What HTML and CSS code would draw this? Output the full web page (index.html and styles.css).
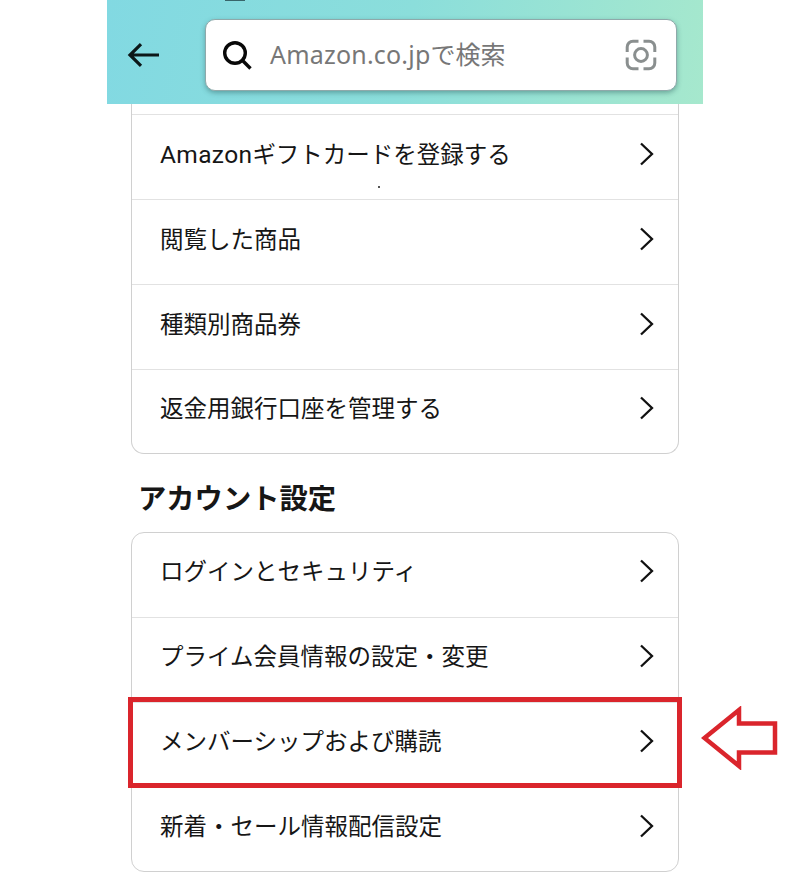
FILE: index.html
```html
<!DOCTYPE html>
<html lang="ja">
<head>
    <meta charset="UTF-8">
    <meta name="viewport" content="width=device-width, initial-scale=1.0">
    <title>アカウントサービス</title>
    <link rel="stylesheet" href="styles.css">
</head>
<body>
    <div class="phone">
        <header class="header">
            <span class="status-mark"></span>
            <svg class="back" width="34" height="28" viewBox="0 0 34 28">
                <path d="M32 14H3M14 3.2L3 14l11 10.8"/>
            </svg>
            <div class="search">
                <svg class="search-icon" width="32" height="32" viewBox="0 0 32 32">
                    <circle cx="13" cy="13" r="10.3"/>
                    <path d="M20.3 20.3L28.5 28.5"/>
                </svg>
                <span class="search-text"><span class="search-latin">Amazon.co.jp</span>で検索</span>
                <svg class="camera" width="32" height="32" viewBox="0 0 32 32">
                    <path d="M2.2 13V8a5.8 5.8 0 0 1 5.8-5.8h5.5M18.5 2.2H24A5.8 5.8 0 0 1 29.8 8v5M29.8 18.5V24a5.8 5.8 0 0 1-5.8 5.8h-5.5M13.5 29.8H8A5.8 5.8 0 0 1 2.2 24v-5.5"/>
                    <circle cx="16" cy="16" r="6.4"/>
                </svg>
            </div>
        </header>

        <ul class="card card-cut">
            <li class="row"><span><span class="latin">Amazon</span>ギフトカードを登録する</span><svg class="chevron" width="16" height="24" viewBox="0 0 16 24"><path d="M2 1.5L13 12 2 22.5"/></svg><i class="dot"></i></li>
            <li class="row"><span>閲覧した商品</span><svg class="chevron" width="16" height="24" viewBox="0 0 16 24"><path d="M2 1.5L13 12 2 22.5"/></svg></li>
            <li class="row"><span>種類別商品券</span><svg class="chevron" width="16" height="24" viewBox="0 0 16 24"><path d="M2 1.5L13 12 2 22.5"/></svg></li>
            <li class="row"><span>返金用銀行口座を管理する</span><svg class="chevron" width="16" height="24" viewBox="0 0 16 24"><path d="M2 1.5L13 12 2 22.5"/></svg></li>
        </ul>

        <h2>アカウント設定</h2>

        <ul class="card">
            <li class="row"><span>ログインとセキュリティ</span><svg class="chevron" width="16" height="24" viewBox="0 0 16 24"><path d="M2 1.5L13 12 2 22.5"/></svg></li>
            <li class="row"><span>プライム会員情報の設定・変更</span><svg class="chevron" width="16" height="24" viewBox="0 0 16 24"><path d="M2 1.5L13 12 2 22.5"/></svg></li>
            <li class="row marked"><span>メンバーシップおよび購読</span><svg class="chevron" width="16" height="24" viewBox="0 0 16 24"><path d="M2 1.5L13 12 2 22.5"/></svg>
                <svg class="arrow" width="78" height="64" viewBox="0 0 78 64"><path d="M3.5 32L38 4v13.500h36v29H38V60z"/></svg>
            </li>
            <li class="row"><span>新着・セール情報配信設定</span><svg class="chevron" width="16" height="24" viewBox="0 0 16 24"><path d="M2 1.5L13 12 2 22.5"/></svg></li>
        </ul>
    </div>
</body>
</html>
```

FILE: styles.css
```css
* {
    box-sizing: border-box;
}
body {
    margin: 0;
    background: #fff;
    color: #161616;
    font-family: Roboto, "Noto Sans CJK JP", sans-serif;
}
svg {
    fill: none;
    flex-shrink: 0;
}
.phone {
    width: 596px;
    height: 894px;
    margin-left: 107px;
}
.header {
    position: relative;
    display: flex;
    align-items: center;
    height: 104px;
    padding: 5px 26px 0 20px;
    background: linear-gradient(100deg, #82d9e2, #8bdedb 50%, #a6e8cd);
}
.status-mark {
    position: absolute;
    top: 0;
    left: 118px;
    width: 20px;
    height: 1px;
    background: #38656a;
}
.back {
    stroke: #0c1718;
    stroke-width: 3.2;
}
.search {
    display: flex;
    align-items: center;
    width: 472px;
    height: 72px;
    margin-left: auto;
    padding: 0 19px 0 16px;
    background: #fff;
    border: 1px solid #8fa9aa;
    border-radius: 10px;
    box-shadow: 0 2px 5px rgba(40, 90, 90, 0.45);
}
.search-icon {
    margin-top: 2px;
    stroke: #080808;
    stroke-width: 3.4;
}
.search-text {
    flex: 1;
    margin-left: 16px;
    color: #777;
    font-size: 25px;
    line-height: 36px;
    white-space: nowrap;
}
.search-latin {
    font-family: "Noto Sans", sans-serif;
    letter-spacing: 0.2px;
}
.camera {
    stroke: #8a8f8f;
    stroke-width: 3;
}
.card {
    list-style: none;
    width: 548px;
    margin: 0 0 0 24px;
    padding: 0;
    border: 1px solid #d0d0d0;
    border-radius: 13px;
}
.card-cut {
    padding-top: 10px;
    border-top: 0;
    border-radius: 0 0 13px 13px;
}
.row {
    position: relative;
    display: flex;
    align-items: center;
    justify-content: space-between;
    height: 85px;
    padding: 0 23px 7px 28px;
    border-top: 1px solid #e2e2e2;
    font-size: 23.5px;
    line-height: 34px;
    white-space: nowrap;
}
.row > span {
    padding-top: 2px;
}
.latin {
    font-size: 24.5px;
    letter-spacing: 0.35px;
}
.row:last-child {
    height: 84px;
}
.card:not(.card-cut) .row {
    padding-bottom: 8px;
}
.card:not(.card-cut) .row:first-child {
    border-top: 0;
    height: 84px;
}
.chevron {
    stroke: #111;
    stroke-width: 2.3;
}
.dot {
    position: absolute;
    left: 246px;
    top: 71px;
    width: 2px;
    height: 2px;
    background: #555;
}
h2 {
    margin: 0;
    padding: 26px 0 12px 31px;
    font-size: 28.3px;
    line-height: 40px;
    font-weight: 700;
}
/* red frame and arrow around the highlighted entry */
.marked::after {
    content: "";
    position: absolute;
    z-index: 1;
    top: -6px;
    left: -4px;
    box-sizing: border-box;
    width: 554px;
    height: 91px;
    border: 5px solid #da252c;
}
.arrow {
    position: absolute;
    left: 569px;
    top: 3px;
    stroke: #da252c;
    stroke-width: 4.5;
}
```
